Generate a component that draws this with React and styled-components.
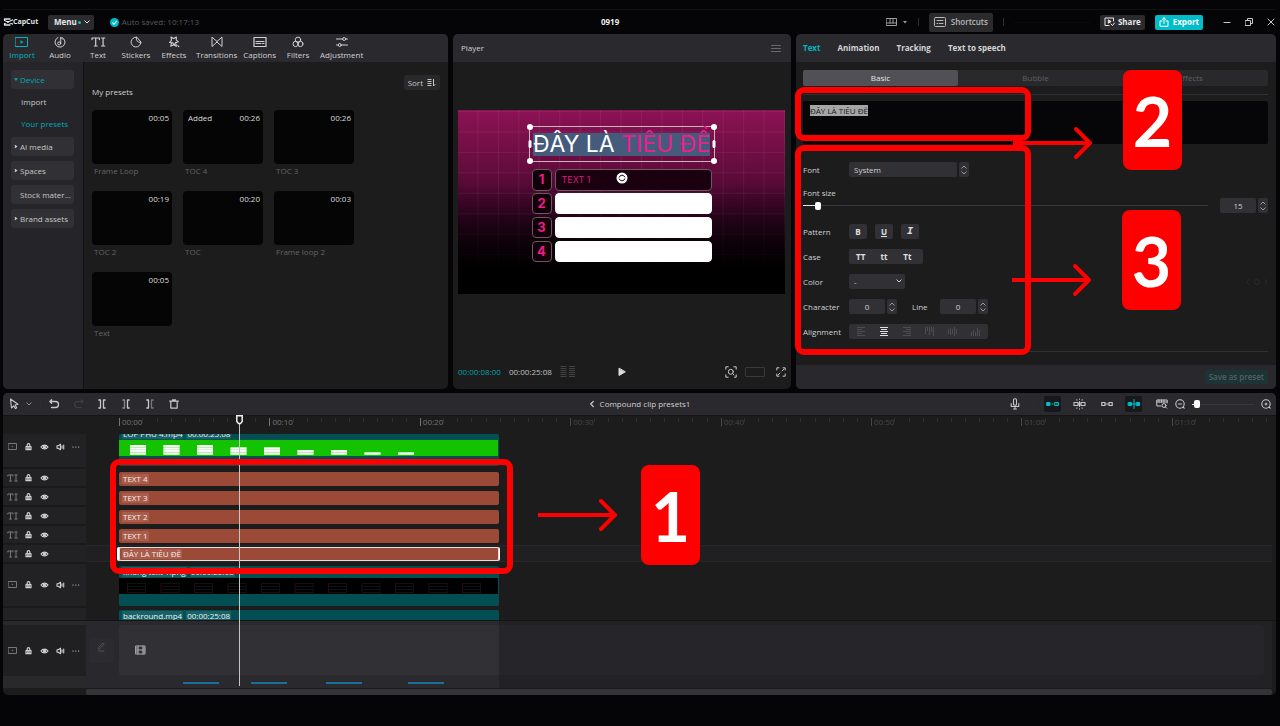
import React, { useEffect, useRef } from 'react';
import styled, { createGlobalStyle } from 'styled-components';

const GlobalStyle = createGlobalStyle`
  * {
    box-sizing: border-box;
  }
  body {
    margin: 0;
    background: #050507;
    color: #d0d0d2;
    font-family: "Open Sans", "Noto Sans", sans-serif;
    font-size: 8px;
    line-height: 12px;
  }
  button, input, select, textarea {
    font: inherit;
    color: inherit;
    margin: 0;
    padding: 0;
    border: none;
    outline: none;
    background: none;
  }
  svg {
    display: block;
    flex: none;
  }
`;

/* ---------- icons ---------- */

const Icon = ({ w = 12, h = w, sw = 1, color = 'currentColor', children }) => (
  <svg
    width={w}
    height={h}
    viewBox={`0 0 ${w} ${h}`}
    fill="none"
    stroke={color}
    strokeWidth={sw}
    strokeLinecap="round"
    strokeLinejoin="round"
    aria-hidden="true"
  >
    {children}
  </svg>
);

const icons = {
  import: (
    <Icon w={14} h={12}>
      <rect x=".5" y="1.5" width="12" height="9" />
      <path d="M5.5 4.2v3.6L8.500 6z" fill="currentColor" stroke="none" />
    </Icon>
  ),
  audio: (
    <Icon w={12}>
      <path d="M4 1.5A5 5 0 1 0 8 1.5" />
      <circle cx="5.2" cy="7.4" r="1.5" />
      <path d="M6.7 7.4V1.2l1.8 2" />
    </Icon>
  ),
  text: (
    <Icon w={15} h={12} sw={1.2}>
      <path d="M1 3.6V2h7.400v1.600M4.700 2v8M3.300 10h2.800M10.500 2h3.300M12.100 2v8M10.500 10h3.300" />
    </Icon>
  ),
  stickers: (
    <Icon w={12}>
      <path d="M6.4 1.2A4.900 4.900 0 1 0 10.900 6.400Z" />
      <path d="M6.4 1.2c-.3 3.400 1 5.400 4.500 5.200" />
    </Icon>
  ),
  effects: (
    <Icon w={12} sw={1.1}>
      <path d="M3 1l2.700 1.400L8.400 1l-.2 2.900 2.200 1.900-2.800.8L6.300 9.300 4.800 6.900 1.500 6.500l2-2.200z" />
      <path d="M3.500 7.200l-.8 3 3-1.400 2.600 1.600-.3-2.600M9.800 9.600l1.100 1" />
    </Icon>
  ),
  transitions: (
    <Icon w={12}>
      <path d="M1 1.500v9l5-4.500zM11 1.500v9L6 6z" />
    </Icon>
  ),
  captions: (
    <Icon w={14} h={12} sw={1.2}>
      <rect x="1" y="1.500" width="12" height="9" />
      <path d="M3 5.500h8M3 7.500h5M9.500 7.500h1.500" />
    </Icon>
  ),
  filters: (
    <Icon w={12}>
      <circle cx="6" cy="3.800" r="2.700" />
      <circle cx="3.700" cy="7.900" r="2.700" />
      <circle cx="8.300" cy="7.900" r="2.700" />
    </Icon>
  ),
  adjustment: (
    <Icon w={12}>
      <path d="M.5 3h6.200M9.800 3h1.700M.5 9h1.700M5.300 9h6.200" />
      <circle cx="8.200" cy="3" r="1.500" />
      <circle cx="3.800" cy="9" r="1.500" />
    </Icon>
  ),
  layout: (
    <Icon w={11} h={10}>
      <path d="M.5 1.500h10v7H.5zM.5 6h10M4 1.500V6M7 1.500V6" />
    </Icon>
  ),
  shortcuts: (
    <Icon w={12} h={10}>
      <rect x=".5" y=".5" width="11" height="9" rx="1" />
      <path d="M3 3.500h6M3 6.500h1M5.500 6.500h3.500" />
    </Icon>
  ),
  share: (
    <Icon w={11} h={10}>
      <path d="M5 8.500H1V1h8.500v3" />
      <path d="M4.300 3.200v3L6.800 4.700z" fill="currentColor" />
      <path d="M7 7l1.500 1.500L10.500 6" />
    </Icon>
  ),
  export: (
    <Icon w={10} h={10}>
      <path d="M3 4H1v5.300h8V4H7M5 6.500V.8M3.200 2.400L5 .8l1.800 1.600" />
    </Icon>
  ),
  minimize: <Icon w={8}><path d="M1 4.500h6" /></Icon>,
  restore: (
    <Icon w={8}>
      <path d="M.5 2.500h5v5h-5zM2.500 2.500v-2h5v5h-2" />
    </Icon>
  ),
  close: <Icon w={8}><path d="M1 1l6 6M7 1L1 7" /></Icon>,
  caretDown: <Icon w={6} h={6}><path d="M.8 1.800L3 4l2.200-2.200" /></Icon>,
  caretSolid: <Icon w={6} h={6}><path d="M1 2h4L3 4.500z" fill="currentColor" stroke="none" /></Icon>,
  caretUp: <Icon w={6} h={6}><path d="M.8 4.200L3 2l2.200 2.200" /></Icon>,
  back: <Icon w={6} h={8} sw={1.2}><path d="M4.200 1.500L1.700 4l2.500 2.500" /></Icon>,
  sort: (
    <Icon w={9} h={8}>
      <path d="M.5 .5h4M.5 2.500h4M.5 4.500h4M.5 6.500h4" strokeLinecap="butt" />
      <path d="M6.500 .5v6.500l1.500-1.500" />
    </Icon>
  ),
  menu: <Icon w={10} h={9}><path d="M.5 1.500h9M.5 4.500h9M.5 7.500h9" /></Icon>,
  waves: (
    <Icon w={16} h={11} color="#434346">
      <path d="M.5 .5h6M.5 2.500h6M.5 4.500h6M.5 6.500h6M.5 8.500h6M.5 10.500h6M9 .5h6M9 2.500h6M9 4.500h6M9 6.500h6M9 8.500h6M9 10.500h6" strokeLinecap="butt" />
    </Icon>
  ),
  play: (
    <Icon w={8} h={10}>
      <path d="M1 1.500v7L7 5z" fill="#dcdcde" stroke="#dcdcde" />
    </Icon>
  ),
  zoomFit: (
    <Icon w={12} h={12}>
      <path d="M.8 3.200V.8h2.400M8.800.8h2.400v2.400M.8 8.800v2.400h2.400M11.200 8.800v2.400H9.500" />
      <circle cx="5.800" cy="5.800" r="2.500" />
      <path d="M7.700 7.700L9 9" />
    </Icon>
  ),
  full: (
    <Icon w={10} h={10}>
      <path d="M.8 3V.8H3M7 .8h2.200V3M.8 7v2.200H3M9.200 7v2.200H7M6 4l2-2M4 6L2 8" />
    </Icon>
  ),
  pointer: (
    <Icon w={10} h={12} sw={1.1}>
      <path d="M1.500 1l1 9 2.200-2.200 1.800 2.800 1.200-.8-1.600-2.800L9 6.300z" />
    </Icon>
  ),
  undo: (
    <Icon w={11} h={10} sw={1.3}>
      <path d="M2.600.8L.9 2.500l1.700 1.700M1 2.500h5.500a3 3 0 0 1 0 6H2.500" />
    </Icon>
  ),
  redo: (
    <Icon w={11} h={10} sw={1.2} color="#3f3f43">
      <path d="M8.400.8l1.700 1.700-1.700 1.700M10 2.500H4.500a3 3 0 0 0 0 6h4" />
    </Icon>
  ),
  split: (
    <Icon w={8} h={10} sw={1.3}>
      <path d="M.8 1h1.700v8H.8M7.200 1H5.500v8h1.700" />
    </Icon>
  ),
  splitLeft: (
    <Icon w={8} h={10} sw={1.3}>
      <path d="M.8 1h1.700v8H.8" opacity=".6" />
      <path d="M7.200 1H5.500v8h1.700" />
    </Icon>
  ),
  splitRight: (
    <Icon w={8} h={10} sw={1.3}>
      <path d="M.8 1h1.700v8H.8" />
      <path d="M7.200 1H5.500v8h1.700" opacity=".5" />
    </Icon>
  ),
  trash: (
    <Icon w={10} h={10} sw={1.2}>
      <path d="M.7 2.200h8.600M1.800 2.200v6.900h6.400V2.200M3.500.8h3" />
    </Icon>
  ),
  mic: (
    <Icon w={10} h={12} sw={1.1}>
      <rect x="3.500" y=".8" width="3" height="6.500" rx="1.300" />
      <path d="M1.200 5.500v3h7.600v-3M5 8.700v2.300M3.500 11h3" />
    </Icon>
  ),
  magnet: (
    <Icon w={14} h={8}>
      <path d="M1 2.500h3v3H1z" fill="currentColor" />
      <path d="M9 2.500h3.500v3H9zM10.500 4h.5M6 4h1" />
    </Icon>
  ),
  autoSnap: (
    <Icon w={13} h={12} sw={1.1}>
      <path d="M1 4.500h4v3H1zM8 4.500h4v3H8zM5 6h3M6.500 3.500v5" />
      <path d="M6.500 1v.2M6.500 10.800v.2M3.800 1.800l.2.300M9.200 1.800l-.2.300M3.800 10.200l.2-.3M9.200 10.200l-.2-.3" />
    </Icon>
  ),
  link: (
    <Icon w={12} h={8} sw={1.2}>
      <path d="M.8 2.500h3.200v3H.8zM8 2.500h3.200v3H8zM5 4h2" />
    </Icon>
  ),
  preview: (
    <Icon w={14} h={10}>
      <path d="M1.500 3.500h3v3h-3zM9.500 3.500h3v3h-3z" fill="currentColor" />
      <path d="M7 .5v9M5.500 5h3" />
    </Icon>
  ),
  cover: (
    <Icon w={12} h={10}>
      <path d="M5 7H.8V1h10.400v3M.8 3h10M3 1v2M5.500 1v2M8 1v2" />
      <circle cx="8" cy="6.500" r="2" />
      <path d="M9.500 8l1.200 1.200" />
    </Icon>
  ),
  zoomOut: (
    <Icon w={10} h={10} sw={1.1}>
      <circle cx="5" cy="5" r="4.200" />
      <path d="M3.400 5h3.200M8 8l1.200 1.200" />
    </Icon>
  ),
  zoomIn: (
    <Icon w={10} h={10} sw={1.1}>
      <circle cx="5" cy="5" r="4.200" />
      <path d="M4 5h2M5 4v2M8 8l1.200 1.200" />
    </Icon>
  ),
  clip: (
    <Icon w={9} h={8} color="#77777a">
      <rect x=".5" y=".5" width="8" height="6" />
      <path d="M3.800 2.500v2l1.600-1z" fill="#77777a" stroke="none" />
    </Icon>
  ),
  textTrack: (
    <Icon w={11} h={8} color="#77777a">
      <path d="M.8 2V1h5.200v1M3.500 1v6M2.500 7h2M7.800 1h2.400M9 1v6M7.800 7h2.400" />
    </Icon>
  ),
  lock: (
    <Icon w={7} h={8} sw={1.2}>
      <path d="M2.200 3.500V2a1.300 1.300 0 0 1 2.600 0v1.500" />
      <path d="M1 3.700h5v3H1zM2.500 5.200h2" />
    </Icon>
  ),
  eye: (
    <Icon w={9} h={8} sw={1.2}>
      <path d="M1 4c1.800-2.600 5.200-2.600 7 0-1.800 2.600-5.200 2.600-7 0z" />
      <circle cx="4.500" cy="4" r="1" fill="currentColor" />
    </Icon>
  ),
  speaker: (
    <Icon w={9} h={8} sw={1.1}>
      <path d="M1 2.800h1.300L4.500 1.200v5.600L2.300 5.200H1zM6 2.800v2.400M7.700 2v4" />
    </Icon>
  ),
  dots: (
    <Icon w={8} h={4} sw={1.2}>
      <path d="M1 2h.1M3.800 2h.1M6.600 2h.1" />
    </Icon>
  ),
  pencil: (
    <Icon w={9} h={10} color="#505053">
      <path d="M1.500 7l.5-2L6 1l1.300 1.300-4 4zM1.500 9h5.500" />
    </Icon>
  ),
  film: (
    <Icon w={11} h={10} color="#aeaeb0">
      <path d="M1 1h9v8H1zM3 1v8M8 1v8M3 5h5" />
      <path d="M1.300 3h1.500M1.300 5h1.500M1.300 7h1.500M8.200 3h1.500M8.200 5h1.500M8.200 7h1.500" />
    </Icon>
  ),
  keyframe: (
    <Icon w={22} h={8} color="#2a2a2c">
      <path d="M3 1.500L1 4l2 2.500M11 1l3 3-3 3-3-3zM19 1.500L21 4l-2 2.500" />
    </Icon>
  ),
  rotate: (
    <Icon w={12} h={12}>
      <circle cx="6" cy="6" r="5.500" fill="#fff" stroke="none" />
      <path d="M3.200 5.200a3 3 0 0 1 5.600-.2M8.800 6.800a3 3 0 0 1-5.600.2" stroke="#111" />
    </Icon>
  ),
};

/* ---------- page ---------- */

const Page = styled.div`
  min-height: 100vh;
  min-width: 900px;
  padding: 9px 4px 32px 3px;
  background: #050507;
`;

const Header = styled.header`
  display: grid;
  grid-template-columns: 600fr auto 659fr;
  align-items: center;
  height: 25px;
  border-top: 1px solid #121214;
`;

const HeaderSide = styled.div`
  display: flex;
  align-items: center;
  gap: ${({ gap }) => gap || '10px'};
  justify-content: ${({ end }) => (end ? 'flex-end' : 'flex-start')};
`;

const Logo = styled.div`
  display: flex;
  align-items: center;
  width: 35px;
  font-size: 7px;
  font-weight: 700;
  color: #e6e6e8;
`;

const Pill = styled.button`
  display: flex;
  align-items: center;
  justify-content: center;
  gap: ${({ gap }) => gap || '4px'};
  height: ${({ tall }) => (tall ? '19px' : '15px')};
  padding: ${({ pad }) => pad || '0 4px'};
  border-radius: 2px;
  white-space: nowrap;
  font-weight: ${({ weight }) => weight || 600};
  background: ${({ bg }) => bg || '#2b2b2e'};
  color: ${({ fg }) => fg || '#e8e8ea'};
`;

const MenuDot = styled.i`
  width: 3px;
  height: 3px;
  border-radius: 50%;
  background: #00c1cd;
`;

const Saved = styled.div`
  display: flex;
  align-items: center;
  gap: 3px;
  margin-left: 6px;
  color: #58585b;
`;

const ProjectTitle = styled.h1`
  margin: 0;
  font-size: 8px;
  line-height: 12px;
  font-weight: 700;
  color: #ececee;
`;

const Divider = styled.i`
  width: 1px;
  height: 8px;
  background: #2d2d30;
`;

const Account = styled.span`
  width: 76px;
  height: 1px;
  background: #0b0b0d;
`;

const WindowControls = styled.div`
  display: flex;
  gap: 14px;
  margin: 0 1px 0 10px;
`;

const IconButton = styled.button`
  display: flex;
  align-items: center;
  justify-content: center;
  gap: ${({ gap }) => gap || '0px'};
  width: ${({ w }) => w || 'auto'};
  height: ${({ h }) => h || 'auto'};
  border-radius: 2px;
  background: ${({ active }) => (active ? '#18181a' : 'transparent')};
  color: ${({ active, fg }) => (active ? '#00bcc9' : fg || '#c8c8ca')};
`;

const Workspace = styled.main`
  display: grid;
  grid-template-columns: minmax(0, 445fr) minmax(0, 338fr) minmax(0, 480fr);
  gap: 5px;
  margin-bottom: 4px;
`;

const Panel = styled.section`
  position: relative;
  display: flex;
  flex-direction: column;
  border-radius: 5px;
  background: #1c1c1d;
`;

const PanelHead = styled.div`
  display: flex;
  align-items: center;
  height: 28px;
  padding: ${({ pad }) => pad || '0'};
  gap: ${({ gap }) => gap || '0'};
  border-radius: 5px 5px 0 0;
  background: #2a2a2e;
`;

const PushRight = styled.div`
  margin-left: auto;
`;

/* ---------- media panel ---------- */

const NavItem = styled.button`
  display: flex;
  flex-direction: column;
  align-items: center;
  min-width: 38px;
  padding: 1px 3px 0;
  gap: 1px;
  color: ${({ active }) => (active ? '#00b4c0' : '#d0d0d2')};
`;

const MediaBody = styled.div`
  display: flex;
  flex: 1;
`;

const Sidebar = styled.nav`
  flex: 0 0 81px;
  display: flex;
  flex-direction: column;
  gap: 5px;
  padding: 8px 9px 8px 8px;
  border-right: 1px solid #101011;
  border-radius: 0 0 0 5px;
  background: #252529;
`;

const SideItem = styled.button`
  display: flex;
  align-items: center;
  gap: 2px;
  height: 19px;
  padding-left: 3px;
  border-radius: 3px;
  background: #313135;
  white-space: nowrap;
  color: ${({ active }) => (active ? '#00a9b4' : '#c6c6c8')};
`;

const Arrow = styled.i`
  width: 4px;
  height: 4px;
  background: ${({ blank }) => (blank ? 'transparent' : 'currentColor')};
  clip-path: ${({ open }) => (open ? 'polygon(0 20%, 100% 20%, 50% 90%)' : 'polygon(20% 0, 90% 50%, 20% 100%)')};
`;

const SubList = styled.div`
  display: flex;
  flex-direction: column;
  margin: -3px 0;
`;

const SubItem = styled.button`
  height: 22px;
  padding-left: 10px;
  text-align: left;
  color: ${({ active }) => (active ? '#00a9b4' : '#c6c6c8')};
`;

const Presets = styled.div`
  flex: 1;
  padding: 13px 8px;
`;

const SortRow = styled.div`
  display: flex;
  justify-content: flex-end;
`;

const PresetsTitle = styled.h2`
  margin: -4px 0 12px;
  font-size: 8px;
  line-height: 12px;
  font-weight: 400;
`;

const PresetGrid = styled.div`
  display: grid;
  grid-template-columns: repeat(auto-fill, 80px);
  gap: 14px 11px;
`;

const PresetThumb = styled.div`
  display: flex;
  justify-content: space-between;
  height: 54px;
  padding: 2px 3px 0 5px;
  border-radius: 4px;
  background: #050506;
  color: #dcdcde;
`;

const PresetName = styled.div`
  padding: 1px 2px 0;
  color: #636366;
`;

const presets = [
  ['Frame Loop', '00:05'],
  ['TOC 4', '00:26', 'Added'],
  ['TOC 3', '00:26'],
  ['TOC 2', '00:19'],
  ['TOC', '00:20'],
  ['Frame loop 2', '00:03'],
  ['Text', '00:05'],
];

const navItems = [
  ['Import', 'import'],
  ['Audio', 'audio'],
  ['Text', 'text'],
  ['Stickers', 'stickers'],
  ['Effects', 'effects'],
  ['Transitions', 'transitions'],
  ['Captions', 'captions'],
  ['Filters', 'filters'],
  ['Adjustment', 'adjustment'],
];

const MediaPanel = () => (
  <Panel>
    <PanelHead>
      {navItems.map(([label, icon], i) => (
        <NavItem key={label} active={i === 0 ? 1 : undefined}>
          {icons[icon]}
          {label}
        </NavItem>
      ))}
    </PanelHead>
    <MediaBody>
      <Sidebar>
        <SideItem active={1}><Arrow open={1} />Device</SideItem>
        <SubList>
          <SubItem>Import</SubItem>
          <SubItem active={1}>Your presets</SubItem>
        </SubList>
        <SideItem><Arrow />AI media</SideItem>
        <SideItem><Arrow />Spaces</SideItem>
        <SideItem><Arrow blank={1} />Stock mater...</SideItem>
        <SideItem><Arrow />Brand assets</SideItem>
      </Sidebar>
      <Presets>
        <SortRow>
          <Pill weight={400} fg="#c6c6c8" bg="#29292b">Sort {icons.sort}</Pill>
        </SortRow>
        <PresetsTitle>My presets</PresetsTitle>
        <PresetGrid>
          {presets.map(([name, time, tag]) => (
            <div key={name}>
              <PresetThumb>
                <span>{tag}</span>
                <span>{time}</span>
              </PresetThumb>
              <PresetName>{name}</PresetName>
            </div>
          ))}
        </PresetGrid>
      </Presets>
    </MediaBody>
  </Panel>
);

/* ---------- player ---------- */

const Stage = styled.div`
  flex: 1;
  display: flex;
  align-items: center;
  padding: 0 6px 12px 5px;
`;

const Canvas = styled.div`
  flex: 1;
  display: flex;
  flex-direction: column;
  align-items: center;
  gap: 7px;
  min-height: 184px;
  padding-top: 16px;
  background:
    linear-gradient(transparent 40%, #000 90%),
    linear-gradient(90deg, transparent calc(100% - 1px), rgba(255, 255, 255, 0.06) 0) 0 0 / calc(100% / 16) 100%,
    linear-gradient(rgba(255, 255, 255, 0.06) 1px, transparent 0) 0 1px / 100% calc(100% / 9),
    linear-gradient(#8c1255, #6a0d40 28%, #48072f 50%, #220316 75%, #000 95%);
`;

const TitleFrame = styled.div`
  position: relative;
  display: flex;
  align-items: center;
  justify-content: center;
  width: 186px;
  height: 36px;
  border: 1px solid #cdb3c2;
`;

const TitleText = styled.p`
  margin: 0;
  background: #455b7c;
  color: #fff;
  font-family: Inter, "Noto Sans", sans-serif;
  font-size: 23px;
  line-height: 23px;
  white-space: nowrap;
  em {
    font-style: normal;
    color: #f01c8c;
  }
`;

const Handle = styled.i`
  position: absolute;
  top: ${({ y }) => y};
  left: ${({ x }) => x};
  width: ${({ side }) => (side ? '3px' : '6px')};
  height: ${({ side }) => (side ? '8px' : '6px')};
  transform: translate(-50%, -50%);
  border-radius: 3px;
  background: #fff;
`;

const TocList = styled.div`
  display: grid;
  gap: 3px;
  width: 180px;
`;

const TocRow = styled.div`
  position: relative;
  display: grid;
  grid-template-columns: 20px 1fr;
  gap: 3px;
  height: 21px;
`;

const TocNumber = styled.div`
  border: 1px solid #6b5862;
  border-radius: 4px;
  background: #120009;
  color: #ee1c8a;
  font-family: Inter, sans-serif;
  font-size: 13px;
  line-height: 19px;
  font-weight: 700;
  text-align: center;
`;

const TocBar = styled.div`
  padding-left: 6px;
  border: 1px solid ${({ filled }) => (filled ? '#fff' : '#6b5862')};
  border-radius: 4px;
  background: ${({ filled }) => (filled ? '#fff' : '#1b0110')};
  color: #d81a7e;
  font-family: Inter, sans-serif;
  font-size: 9px;
  line-height: 20px;
`;

const RotateHandle = styled.span`
  position: absolute;
  left: 84px;
  top: 3px;
`;

const Transport = styled.div`
  display: grid;
  grid-template-columns: 1fr auto 1fr;
  align-items: center;
  height: 35px;
  padding: 0 5px;
`;

const TransportSide = styled.div`
  display: flex;
  align-items: center;
  gap: 8px;
  justify-content: ${({ end }) => (end ? 'flex-end' : 'flex-start')};
`;

const Timecode = styled.span`
  color: ${({ current }) => (current ? '#00a0aa' : '#c0c0c2')};
`;

const RatioButton = styled.button`
  width: 20px;
  height: 10px;
  border: 1px solid #3a3a3d;
  border-radius: 1px;
  margin-right: 3px;
`;

const corners = [['0%', '0%'], ['100%', '0%'], ['0%', '100%'], ['100%', '100%']];

const PlayerPanel = () => (
  <Panel>
    <PanelHead pad="0 10px 0 8px">
      <span>Player</span>
      <PushRight>
        <IconButton aria-label="Player menu" fg="#68686b">{icons.menu}</IconButton>
      </PushRight>
    </PanelHead>
    <Stage>
      <Canvas>
        <TitleFrame>
          <TitleText>ĐÂY LÀ <em>TIÊU ĐỀ</em></TitleText>
          {corners.map(([x, y]) => <Handle key={x + y} x={x} y={y} />)}
          <Handle side={1} x="0%" y="50%" />
          <Handle side={1} x="100%" y="50%" />
        </TitleFrame>
        <TocList>
          {[1, 2, 3, 4].map((n) => (
            <TocRow key={n}>
              <TocNumber>{n}</TocNumber>
              <TocBar filled={n > 1 ? 1 : undefined}>{n === 1 && 'TEXT 1'}</TocBar>
              {n === 1 && <RotateHandle>{icons.rotate}</RotateHandle>}
            </TocRow>
          ))}
        </TocList>
      </Canvas>
    </Stage>
    <Transport>
      <TransportSide>
        <Timecode current={1}>00:00:08:00</Timecode>
        <Timecode>00:00:25:08</Timecode>
        {icons.waves}
      </TransportSide>
      <IconButton aria-label="Play">{icons.play}</IconButton>
      <TransportSide end={1}>
        <IconButton aria-label="Zoom to fit">{icons.zoomFit}</IconButton>
        <RatioButton aria-label="Ratio" />
        <IconButton aria-label="Full screen">{icons.full}</IconButton>
      </TransportSide>
    </Transport>
  </Panel>
);

/* ---------- text properties ---------- */

const Tab = styled.button`
  font-weight: 700;
  color: ${({ active }) => (active ? '#00b4c0' : '#d4d4d6')};
`;

const PropsBody = styled.div`
  flex: 1;
  padding: 8px 8px 13px 7px;
`;

const Segments = styled.div`
  display: grid;
  grid-template-columns: repeat(3, 1fr);
  border-radius: 2px;
  background: #29292c;
`;

const Segment = styled.button`
  height: 16px;
  border-radius: 2px;
  background: ${({ active }) => (active ? '#505056' : 'transparent')};
  color: ${({ active }) => (active ? '#e4e4e6' : '#5e5e61')};
`;

const Rule = styled.hr`
  height: 1px;
  margin: ${({ m }) => m};
  border: none;
  background: #303033;
`;

const Content = styled.textarea`
  display: block;
  width: 100%;
  height: 43px;
  padding: 4px 7px;
  border-radius: 2px;
  background: #060608;
  line-height: 11px;
  resize: none;
  &::selection {
    background: #a6a6a6;
    color: #1a1a1a;
  }
`;

const Rows = styled.div`
  display: grid;
  gap: 10px;
`;

const Field = styled.div`
  display: flex;
  align-items: center;
  height: 15px;
`;

const FontField = styled(Field)`
  margin: 18px 0 10px;
`;

const FieldLabel = styled.label`
  flex: 0 0 46px;
  white-space: nowrap;
`;

const LineLabel = styled.label`
  width: 28px;
  margin-left: 15px;
`;

const SelectBox = styled.div`
  position: relative;
  width: ${({ w }) => w};
  svg {
    position: absolute;
    right: 3px;
    top: 4px;
    pointer-events: none;
  }
`;

const Select = styled.select`
  display: block;
  width: 100%;
  height: 15px;
  padding-left: 5px;
  border-radius: 2px;
  background: #313135;
  appearance: none;
`;

const NumberBox = styled.input`
  width: 36px;
  height: 15px;
  border-radius: 2px;
  background: #313135;
  text-align: center;
`;

const StepperBox = styled.div`
  display: flex;
  flex-direction: column;
  align-items: center;
  justify-content: center;
  width: 10px;
  height: 15px;
  margin-left: 2px;
  border-radius: 2px;
  background: #313135;
`;

const Stepper = ({ name }) => (
  <StepperBox>
    <IconButton fg="#9a9a9c" aria-label={`Increase ${name}`}>{icons.caretUp}</IconButton>
    <IconButton fg="#9a9a9c" aria-label={`Decrease ${name}`}>{icons.caretDown}</IconButton>
  </StepperBox>
);

const Slider = styled.input`
  flex: ${({ w }) => (w ? `0 0 ${w}` : '1')};
  min-width: 0;
  height: 10px;
  appearance: none;
  &::-webkit-slider-runnable-track {
    height: 8px;
    background: linear-gradient(90deg, #e4e4e6 ${({ defaultValue }) => defaultValue}%, #39393c ${({ defaultValue }) => defaultValue}%) center / 100% 1px no-repeat;
  }
  &::-webkit-slider-thumb {
    appearance: none;
    width: 6px;
    height: 8px;
    border-radius: 2px;
    background: #fff;
  }
`;

const SizeRow = styled.div`
  display: flex;
  align-items: center;
  height: 15px;
  margin: -1px 0 11px;
`;

const SizeValue = styled.div`
  display: flex;
  margin-left: 12px;
`;

const Toggle = styled.button`
  width: 18px;
  height: 15px;
  margin-right: 8px;
  border-radius: 2px;
  background: #313135;
  color: #e0e0e2;
  font-weight: 700;
  font-style: ${({ italic }) => (italic ? 'italic' : 'normal')};
  font-family: ${({ italic }) => (italic ? '"Liberation Mono", monospace' : 'inherit')};
  font-size: ${({ italic }) => (italic ? '10px' : '8px')};
  text-decoration: ${({ underline }) => (underline ? 'underline' : 'none')};
`;

const Group = styled.div`
  display: flex;
  width: ${({ w }) => w};
  height: 15px;
  padding-right: ${({ pr }) => pr || '0'};
  border-radius: 2px;
  background: #313135;
`;

const GroupButton = styled.button`
  display: flex;
  flex: 1;
  align-items: center;
  justify-content: center;
  font-weight: 700;
  color: ${({ dim }) => (dim ? '#4c4c51' : '#e0e0e2')};
`;

const PropsFoot = styled.div`
  display: flex;
  align-items: center;
  justify-content: flex-end;
  height: 24px;
  padding-right: 8px;
  border-radius: 0 0 5px 5px;
  background: #29292d;
`;

const SavePreset = styled.button`
  height: 14px;
  padding: 0 4px;
  border-radius: 2px;
  background: #1d3336;
  color: #4f6265;
  font-weight: 600;
`;

const alignPaths = [
  'M1 .5h8M1 2.500h5M1 4.500h8M1 6.500h5M1 8.500h8',
  'M1 .5h8M2 2.500h6M1 4.500h8M2 6.500h6M1 8.500h8',
  'M1 .5h8M4 2.500h5M1 4.500h8M4 6.500h5M1 8.500h8',
  'M.5 0v7M2.500 0v4M4.500 0v8M6.500 0v5M8.500 0v9',
  'M.5 2v5M2.500 1v7M4.500 2v5M6.500 0v9M8.500 2v5',
  'M.5 5v4M2.500 3v6M4.500 5v4M6.500 1v8M8.500 3v6',
];

const TextPanel = () => {
  const content = useRef(null);

  useEffect(() => {
    content.current.focus();
    content.current.select();
  }, []);

  return (
    <Panel>
      <PanelHead pad="0 7px" gap="17px">
        <Tab active={1}>Text</Tab>
        <Tab>Animation</Tab>
        <Tab>Tracking</Tab>
        <Tab>Text to speech</Tab>
      </PanelHead>
      <PropsBody>
        <Segments>
          <Segment active={1}>Basic</Segment>
          <Segment>Bubble</Segment>
          <Segment>Effects</Segment>
        </Segments>
        <Rule m="8px 0 6px" />
        <Content ref={content} aria-label="Text content" defaultValue="ĐÂY LÀ TIÊU ĐỀ" />
        <FontField>
          <FieldLabel htmlFor="font">Font</FieldLabel>
          <SelectBox w="108px">
            <Select id="font"><option>System</option></Select>
          </SelectBox>
          <Stepper name="font" />
        </FontField>
        <label htmlFor="size">Font size</label>
        <SizeRow>
          <Slider id="size" type="range" defaultValue={3} />
          <SizeValue>
            <NumberBox aria-label="Font size value" defaultValue="15" />
            <Stepper name="font size" />
          </SizeValue>
        </SizeRow>
        <Rows>
          <Field>
            <FieldLabel as="span">Pattern</FieldLabel>
            <Toggle>B</Toggle>
            <Toggle underline={1}>U</Toggle>
            <Toggle italic={1}>I</Toggle>
          </Field>
          <Field>
            <FieldLabel as="span">Case</FieldLabel>
            <Group w="74px" pr="4px">
              <GroupButton>TT</GroupButton>
              <GroupButton>tt</GroupButton>
              <GroupButton>Tt</GroupButton>
            </Group>
          </Field>
          <Field>
            <FieldLabel htmlFor="color">Color</FieldLabel>
            <SelectBox w="56px">
              <Select id="color"><option>-</option></Select>
              {icons.caretDown}
            </SelectBox>
            <PushRight>{icons.keyframe}</PushRight>
          </Field>
          <Field>
            <FieldLabel htmlFor="character">Character</FieldLabel>
            <NumberBox id="character" defaultValue="0" />
            <Stepper name="character" />
            <LineLabel htmlFor="line">Line</LineLabel>
            <NumberBox id="line" defaultValue="0" />
            <Stepper name="line" />
          </Field>
          <Field>
            <FieldLabel as="span">Alignment</FieldLabel>
            <Group w="139px">
              {alignPaths.map((d, i) => (
                <GroupButton key={d} dim={i === 1 ? undefined : 1} aria-label={`Alignment ${i + 1}`}>
                  <svg width="10" height="9" viewBox="0 0 10 9" fill="none" stroke="currentColor">
                    <path d={d} />
                  </svg>
                </GroupButton>
              ))}
            </Group>
          </Field>
        </Rows>
        <Rule m="12px 0 0" />
      </PropsBody>
      <PropsFoot>
        <SavePreset>Save as preset</SavePreset>
      </PropsFoot>

      <Mark x="-1px" y="53px" w="236px" h="54px" />
      <Mark x="-1px" y="111px" w="236px" h="210px" />
      <MarkArrow x="217px" y="92px" />
      <MarkArrow x="216px" y="229px" />
      <MarkNumber x="327px" y="36px">2</MarkNumber>
      <MarkNumber x="326px" y="176px">3</MarkNumber>
    </Panel>
  );
};

/* ---------- callouts over the editor ---------- */

const Mark = styled.div`
  position: absolute;
  z-index: 3;
  left: ${({ x }) => x};
  top: ${({ y }) => y};
  width: ${({ w }) => w};
  height: ${({ h }) => h};
  border: 6px solid #ff0000;
  border-radius: 9px;
  pointer-events: none;
`;

const MarkNumber = styled.div`
  position: absolute;
  z-index: 3;
  left: ${({ x }) => x};
  top: ${({ y }) => y};
  width: 59px;
  height: 100px;
  border-radius: 8px;
  background: #ff0000;
  color: #fff;
  font-family: Lato, sans-serif;
  font-size: 68px;
  line-height: 101px;
  font-weight: 700;
  text-align: center;
  pointer-events: none;
`;

const ArrowBox = styled.div`
  position: absolute;
  z-index: 4;
  left: ${({ x }) => x};
  top: ${({ y }) => y};
  pointer-events: none;
`;

const MarkArrow = ({ x, y }) => (
  <ArrowBox x={x} y={y}>
    <svg width="80" height="34" viewBox="0 0 80 34" fill="none" stroke="#ff0000" strokeWidth="4">
      <path d="M0 17h77" />
      <path d="M63 3l14 14-14 14" strokeLinecap="round" strokeLinejoin="round" />
    </svg>
  </ArrowBox>
);

/* ---------- timeline ---------- */

const TimelineWrap = styled.div`
  position: relative;
`;

const TimelinePanel = styled(Panel)`
  overflow: hidden;
`;

const Toolbar = styled.div`
  display: grid;
  grid-template-columns: 585fr auto 585fr;
  align-items: center;
  height: 23px;
  padding: 0 5px;
  border-bottom: 1px solid #151516;
  background: #2a2a2e;
`;

const ToolSide = styled.div`
  display: flex;
  align-items: center;
  justify-content: ${({ end }) => (end ? 'flex-end' : 'flex-start')};
  gap: ${({ gap }) => gap || '0'};
`;

const ZoomTools = styled.div`
  display: flex;
  align-items: center;
  gap: 7px;
  margin-left: -4px;
`;

const Breadcrumb = styled.button`
  display: flex;
  align-items: center;
  gap: 5px;
`;

const Ruler = styled.div`
  display: flex;
  height: 18px;
  padding: 2px 0 0 116px;
  overflow: hidden;
`;

const RulerPart = styled.div`
  flex: 0 0 13%;
  display: grid;
  grid-template-columns: repeat(10, 1fr);
  height: 8px;
  color: ${({ dim }) => (dim ? '#464648' : '#747476')};
`;

const Tick = styled.span`
  height: ${({ major }) => (major ? '8px' : '4px')};
  padding-left: 2px;
  border-left: 1px solid ${({ major }) => (major ? 'currentColor' : '#2f2f31')};
  line-height: 8px;
  white-space: nowrap;
`;

const Tracks = styled.div`
  display: flex;
  flex-direction: column;
  height: 187px;
  overflow: hidden;
  border-bottom: 1px solid #141415;
`;

const TrackRow = styled.div`
  flex: 0 0 ${({ h }) => h};
  display: grid;
  grid-template-columns: 83px minmax(0, 1fr);
`;

const TrackHead = styled.div`
  display: flex;
  align-items: center;
  height: 100%;
  padding: 0 0 ${({ pb }) => pb || '0'} 1px;
  border-bottom: 2px solid #1a1a1b;
  background: #222224;
`;

const Lane = styled.div`
  display: flex;
  flex-direction: column;
  justify-content: ${({ top }) => (top ? 'flex-start' : 'center')};
  height: ${({ selected }) => (selected ? '17px' : '100%')};
  margin-right: 4px;
  padding-top: ${({ pt }) => pt || '0'};
  padding-left: 33px;
  background: ${({ selected }) => (selected ? '#202022' : 'transparent')};
  box-shadow: ${({ selected }) => (selected ? 'inset 0 1px #272729, inset 0 -1px #272729' : 'none')};
`;

const Clip = styled.div`
  display: flex;
  align-items: center;
  width: 33%;
  height: 14px;
  padding-left: 3px;
  border-radius: 2px;
  background: #9c4a38;
  color: #f8eeea;
  white-space: nowrap;
  outline: ${({ selected }) => (selected ? '1px solid #e4dedc' : 'none')};
  outline-offset: -1px;
  box-shadow: ${({ selected }) => (selected ? '-2px 0 #fff, 1px 0 #fff' : 'none')};
`;

const ClipTag = styled.span`
  padding: 0 1px;
  line-height: 10px;
  border-radius: 1px;
  background: ${({ video }) => (video ? '#1a6166' : '#a85c4c')};
`;

const MediaClip = styled.div`
  display: flex;
  flex-direction: column;
  width: 33%;
  height: ${({ h }) => h};
  border-radius: 2px;
  background: #034e52;
  color: #e6f2f2;
  overflow: hidden;
`;

const ClipLabels = styled.div`
  display: flex;
  gap: 3px;
  padding: 1px 3px;
  height: 12px;
  white-space: nowrap;
`;

const ClippedLabels = styled.div`
  display: flex;
  flex: 0 0 6px;
  align-items: flex-end;
  overflow: hidden;
`;

const GreenStrip = styled.div`
  height: 16px;
  margin-right: 1px;
  background: #14c300;
  overflow: hidden;
`;

const BlackStrip = styled(GreenStrip)`
  background: #000;
`;

const MainTrack = styled.div`
  display: grid;
  grid-template-columns: 83px minmax(0, 1fr);
  height: 67px;
`;

const MainHeadBox = styled.div`
  background: #29292c;
`;

const MainHead = styled.div`
  display: flex;
  align-items: center;
  height: 60px;
  padding-left: 1px;
  border-top: 4px solid #29292c;
  border-bottom: 5px solid #29292c;
  background: #202022;
`;

const MainLane = styled.div`
  display: flex;
  margin-right: 4px;
  background: #222224;
`;

const CoverSlot = styled.div`
  flex: 0 0 33px;
  padding: 17px 5px 0 3px;
  background: #29292d;
`;

const CoverButton = styled.button`
  display: flex;
  justify-content: center;
  width: 25px;
  height: 25px;
  padding-top: 4px;
  border-radius: 3px;
  background: #2c2c30;
`;

const MainRest = styled.div`
  flex: 1;
  display: flex;
  min-width: 0;
`;

const MainClips = styled.div`
  flex: 0 0 33%;
  padding-top: 4px;
  background: #2a2a2e;
`;

const MainDrop = styled.div`
  display: flex;
  align-items: center;
  height: 50px;
  padding-left: 16px;
  border-radius: 3px;
  background: #313135;
`;

const EmptyDrop = styled.div`
  flex: 1;
  height: 50px;
  margin: 4px 8px 0 0;
  border-radius: 0 3px 3px 0;
  background: #26262a;
`;

const AudioMarks = styled.div`
  display: grid;
  grid-template-columns: 64px 68px 75px 82px 36px;
  margin-top: 7px;
`;

const AudioMark = styled.i`
  width: 36px;
  height: 2px;
  background: #1a6f9b;
`;

const ScrollRow = styled.div`
  display: flex;
  height: 7px;
  padding: 0 4px 0 83px;
`;

const ScrollThumb = styled.div`
  flex: 1;
  margin-top: 1px;
  border-radius: 2px;
  background: #343438;
`;

const PlayheadLayer = styled.div`
  position: absolute;
  inset: 22px 0 9px 116px;
  pointer-events: none;
`;

const Playhead = styled.div`
  position: absolute;
  left: 10.4%;
  top: 0;
  bottom: 0;
  width: 1px;
  background: #c4c4c6;
  svg {
    margin-left: -3px;
  }
`;

const HeadSlot = styled.span`
  display: flex;
  justify-content: center;
  width: 16px;
`;

const HeadIcons = ({ kind }) => (
  <>
    <HeadSlot>{kind === 'text' ? icons.textTrack : icons.clip}</HeadSlot>
    <HeadSlot>{icons.lock}</HeadSlot>
    <HeadSlot>{icons.eye}</HeadSlot>
    {kind !== 'text' && <HeadSlot>{icons.speaker}</HeadSlot>}
    {kind !== 'text' && <HeadSlot>{icons.dots}</HeadSlot>}
  </>
);

const greenBars = [4, 4, 4, 3, 3, 2, 2, 1, 1];

const GreenThumbs = () => (
  <svg width="379" height="16" viewBox="0 0 379 16">
    {greenBars.map((count, i) =>
      Array.from({ length: count }, (_, n) => (
        <g key={`${i}-${n}`}>
          <rect x={11 + i * 33.5} y={12.5 - n * 2.5} width="16" height="2.5" fill="#b9efb4" />
          <rect x={11 + i * 33.5} y={12.5 - n * 2.5} width="16" height="1.8" fill="#fff" />
        </g>
      ))
    )}
  </svg>
);

const DarkThumbs = () => (
  <svg width="379" height="16" viewBox="0 0 379 16" fill="none" stroke="#121011">
    {Array.from({ length: 11 }, (_, i) => (
      <g key={i} transform={`translate(${8 + i * 33.5} 0)`}>
        <path d="M1 5.500h18M1 8.500h18M1 11.500h18M1 14.500h18M18.500 5v10" />
        <path d="M.5 5v10" stroke="#260a15" />
      </g>
    ))}
  </svg>
);

const textClips = ['TEXT 4', 'TEXT 3', 'TEXT 2', 'TEXT 1', 'ĐÂY LÀ TIÊU ĐỀ'];
const rulerMarks = ['00:00', '00:10', '00:20', '00:30', '00:40', '00:50', '01:00', '01:10'];

const Timeline = () => (
  <TimelineWrap>
    <TimelinePanel>
      <Toolbar>
        <ToolSide>
          <IconButton w="12px" aria-label="Select">{icons.pointer}</IconButton>
          <IconButton w="18px" fg="#8a8a8c" aria-label="Select options">{icons.caretDown}</IconButton>
          <IconButton w="4px" as="span"><Divider /></IconButton>
          <IconButton w="24px" aria-label="Undo">{icons.undo}</IconButton>
          <IconButton w="24px" aria-label="Redo">{icons.redo}</IconButton>
          <IconButton w="24px" aria-label="Split">{icons.split}</IconButton>
          <IconButton w="24px" aria-label="Delete left">{icons.splitLeft}</IconButton>
          <IconButton w="24px" aria-label="Delete right">{icons.splitRight}</IconButton>
          <IconButton w="24px" aria-label="Delete">{icons.trash}</IconButton>
        </ToolSide>
        <Breadcrumb>{icons.back}Compound clip presets1</Breadcrumb>
        <ToolSide end={1} gap="10px">
          <IconButton w="16px" aria-label="Record">{icons.mic}</IconButton>
          <Divider />
          <IconButton w="17px" h="16px" active={1} aria-label="Main track magnet">{icons.magnet}</IconButton>
          <IconButton w="17px" aria-label="Auto snapping">{icons.autoSnap}</IconButton>
          <IconButton w="17px" aria-label="Linkage">{icons.link}</IconButton>
          <IconButton w="17px" h="16px" active={1} aria-label="Preview axis">{icons.preview}</IconButton>
          <ZoomTools>
            <Divider />
            <IconButton aria-label="Cover">{icons.cover}</IconButton>
            <IconButton aria-label="Zoom out">{icons.zoomOut}</IconButton>
            <Slider w="62px" type="range" aria-label="Zoom" defaultValue={4} />
            <IconButton aria-label="Zoom in">{icons.zoomIn}</IconButton>
          </ZoomTools>
        </ToolSide>
      </Toolbar>
      <Ruler>
        {rulerMarks.map((mark, i) => (
          <RulerPart key={mark} dim={i > 2 ? 1 : undefined}>
            <Tick major={1}>{mark}</Tick>
            {Array.from({ length: 9 }, (_, n) => <Tick key={n} />)}
          </RulerPart>
        ))}
      </Ruler>
      <Tracks>
        <TrackRow h="35px">
          <TrackHead pb="7px"><HeadIcons kind="video" /></TrackHead>
          <Lane top={1}>
            <MediaClip h="32px">
              <ClippedLabels>
                <ClipLabels>
                  <ClipTag video={1}>LỚP PHỦ 4.mp4</ClipTag>
                  <ClipTag video={1}>00:00:25:08</ClipTag>
                </ClipLabels>
              </ClippedLabels>
              <GreenStrip><GreenThumbs /></GreenStrip>
            </MediaClip>
          </Lane>
        </TrackRow>
        {textClips.map((name, i) => {
          const selected = i === 4 ? 1 : undefined;
          return (
            <TrackRow key={name} h="19px">
              <TrackHead><HeadIcons kind="text" /></TrackHead>
              <Lane selected={selected}>
                <Clip selected={selected}><ClipTag>{name}</ClipTag></Clip>
              </Lane>
            </TrackRow>
          );
        })}
        <TrackRow h="44px">
          <TrackHead><HeadIcons kind="video" /></TrackHead>
          <Lane>
            <MediaClip h="40px">
              <ClipLabels>
                <ClipTag video={1}>khung text 1.png</ClipTag>
                <ClipTag video={1}>00:00:25:08</ClipTag>
              </ClipLabels>
              <BlackStrip><DarkThumbs /></BlackStrip>
            </MediaClip>
          </Lane>
        </TrackRow>
        <TrackRow h="50px">
          <TrackHead />
          <Lane top={1} pt="2px">
            <MediaClip h="40px">
              <ClipLabels>
                <ClipTag video={1}>backround.mp4</ClipTag>
                <ClipTag video={1}>00:00:25:08</ClipTag>
              </ClipLabels>
            </MediaClip>
          </Lane>
        </TrackRow>
      </Tracks>
      <MainTrack>
        <MainHeadBox>
          <MainHead><HeadIcons kind="video" /></MainHead>
        </MainHeadBox>
        <MainLane>
          <CoverSlot>
            <CoverButton aria-label="Edit cover">{icons.pencil}</CoverButton>
          </CoverSlot>
          <MainRest>
            <MainClips>
              <MainDrop>{icons.film}</MainDrop>
              <AudioMarks>
                <i />
                <AudioMark />
                <AudioMark />
                <AudioMark />
                <AudioMark />
              </AudioMarks>
            </MainClips>
            <EmptyDrop />
          </MainRest>
        </MainLane>
      </MainTrack>
      <ScrollRow><ScrollThumb /></ScrollRow>
      <PlayheadLayer>
        <Playhead>
          <svg width="8" height="10" viewBox="0 0 8 10" fill="#1c1c1d" stroke="#f0f0f2" strokeWidth="1.5">
            <path d="M.8.8h5.400v5.700L4.500 8.500h-2L.8 6.500z" />
          </svg>
        </Playhead>
      </PlayheadLayer>
    </TimelinePanel>
    <Mark x="107px" y="66px" w="403px" h="115px" />
    <MarkArrow x="535px" y="105px" />
    <MarkNumber x="638px" y="72px">1</MarkNumber>
  </TimelineWrap>
);

/* ---------- app ---------- */

const App = () => (
  <Page>
    <GlobalStyle />
    <Header>
      <HeaderSide>
        <Logo>
          <Icon w={10} h={8} sw={1.3}>
            <path d="M7 1H1.500v1.500L9.500 6M7 7H1.500V5.500L9.500 2" />
          </Icon>
          CapCut
        </Logo>
        <Pill weight={700} pad="0 4px 0 6px" gap="3px">
          <HeaderSide gap="1px">Menu<MenuDot /></HeaderSide>
          {icons.caretDown}
        </Pill>
        <Saved>
          <svg width="9" height="9" viewBox="0 0 9 9">
            <circle cx="4.500" cy="4.500" r="4.500" fill="#00bac6" />
            <path d="M2.500 4.600l1.500 1.500 2.700-3" fill="none" stroke="#fff" strokeWidth="1.100" />
          </svg>
          Auto saved: 10:17:13
        </Saved>
      </HeaderSide>
      <ProjectTitle>0919</ProjectTitle>
      <HeaderSide end={1}>
        <IconButton gap="5px" fg="#9c9c9e" aria-label="Layout">{icons.layout}{icons.caretSolid}</IconButton>
        <Divider />
        <Pill tall={1} fg="#b8b8ba" pad="0 5px" gap="5px">{icons.shortcuts}Shortcuts</Pill>
        <Divider />
        <Account />
        <Pill weight={700} gap="3px">{icons.share}Share</Pill>
        <Pill weight={700} bg="#00bdc9" fg="#fff">{icons.export}Export</Pill>
        <WindowControls>
          <IconButton aria-label="Minimize">{icons.minimize}</IconButton>
          <IconButton aria-label="Restore">{icons.restore}</IconButton>
          <IconButton aria-label="Close">{icons.close}</IconButton>
        </WindowControls>
      </HeaderSide>
    </Header>
    <Workspace>
      <MediaPanel />
      <PlayerPanel />
      <TextPanel />
    </Workspace>
    <Timeline />
  </Page>
);

export default App;
